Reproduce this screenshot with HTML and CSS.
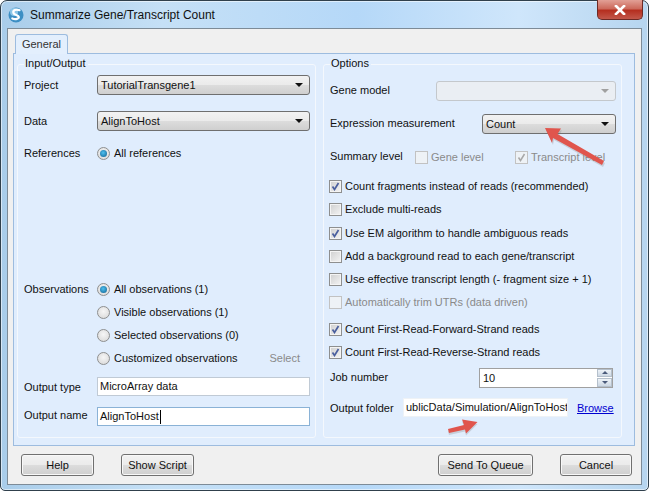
FILE: index.html
```html
<!DOCTYPE html>
<html lang="en">
<head>
<meta charset="utf-8">
<title>Summarize Gene/Transcript Count</title>
<link rel="stylesheet" href="styles.css">
</head>
<body>
<div class="window">
  <div class="titlebar">
    <svg class="app-icon" width="16" height="16" viewBox="0 0 16 16"><circle cx="8" cy="8" r="7.5" fill="#3d8fc4"/><circle cx="6" cy="5" r="4" fill="#8cc6e8"/><path d="M11.5 3.2C8 1.5 4.5 3.5 5.5 6c.9 2.2 5 1.8 5.3 4 .2 1.6-3 3-6.500 1.500" fill="none" stroke="#fff" stroke-width="2.200" stroke-linecap="round"/></svg>
    <span class="title">Summarize Gene/Transcript Count</span>
    <div class="close"><svg width="12" height="10" viewBox="0 0 12 10"><path d="M2 1l8 8M10 1L2 9" stroke="#fff" stroke-width="2.600" stroke-linecap="square" fill="none"/></svg></div>
  </div>
  <div class="client">
    <div class="tabstrip"><div class="tab">General</div></div>
    <div class="panel">
      <section class="group left">
        <div class="legend">Input/Output</div>
        <div class="row r-project"><label class="lbl">Project</label><div class="combo grow"><span>TutorialTransgene1</span><i class="caret"></i></div></div>
        <div class="row r-data"><label class="lbl">Data</label><div class="combo grow"><span>AlignToHost</span><i class="caret"></i></div></div>
        <div class="row r-ref"><label class="lbl">References</label><div class="radio-item"><i class="radio on"></i><span>All references</span></div></div>
        <div class="spacer"></div>
        <div class="row r-obs"><label class="lbl">Observations</label><div class="radio-item"><i class="radio on"></i><span>All observations (1)</span></div></div>
        <div class="row r-obs"><span class="lbl"></span><div class="radio-item"><i class="radio"></i><span>Visible observations (1)</span></div></div>
        <div class="row r-obs"><span class="lbl"></span><div class="radio-item"><i class="radio"></i><span>Selected observations (0)</span></div></div>
        <div class="row r-obs"><span class="lbl"></span><div class="radio-item grow"><i class="radio"></i><span>Customized observations</span></div><span class="muted select">Select</span></div>
        <div class="row r-type"><label class="lbl">Output type</label><div class="input grow">MicroArray data</div></div>
        <div class="row r-name"><label class="lbl lbl-up">Output name</label><div class="input grow focus">AlignToHost<i class="cursor"></i></div></div>
      </section>
      <section class="group right">
        <div class="legend">Options</div>
        <div class="row r-gene"><label class="lbl-r grow">Gene model</label><div class="combo disabled w-gene"><span></span><i class="caret"></i></div></div>
        <div class="row r-expr"><label class="lbl-r grow">Expression measurement</label><div class="combo w-expr"><span>Count</span><i class="caret"></i></div></div>
        <div class="row r-sum">
          <label class="lbl-s">Summary level</label>
          <div class="check-item w-level muted"><i class="check disabled"></i><span>Gene level</span></div>
          <div class="check-item muted"><i class="check disabled"><svg width="9" height="9" viewBox="0 0 9 9"><path d="M1.500 4.500l2 3 4-6.500" fill="none" stroke="#a8a8a8" stroke-width="1.500"/></svg></i><span>Transcript level</span></div>
        </div>
        <div class="checks">
          <div class="check-item c-row"><i class="check"><svg width="9" height="9" viewBox="0 0 9 9"><path d="M1.500 4.500l2 3 4-6.500" fill="none" stroke="#4a5f9e" stroke-width="1.700"/></svg></i><span>Count fragments instead of reads (recommended)</span></div>
          <div class="check-item c-row c-wide"><i class="check"></i><span>Exclude multi-reads</span></div>
          <div class="check-item c-row"><i class="check"><svg width="9" height="9" viewBox="0 0 9 9"><path d="M1.500 4.500l2 3 4-6.500" fill="none" stroke="#4a5f9e" stroke-width="1.700"/></svg></i><span>Use EM algorithm to handle ambiguous reads</span></div>
          <div class="check-item c-row"><i class="check"></i><span>Add a background read to each gene/transcript</span></div>
          <div class="check-item c-row"><i class="check"></i><span>Use effective transcript length (- fragment size + 1)</span></div>
          <div class="check-item c-row muted"><i class="check disabled"></i><span>Automatically trim UTRs (data driven)</span></div>
          <div class="check-item c-row c-gap"><i class="check"><svg width="9" height="9" viewBox="0 0 9 9"><path d="M1.500 4.500l2 3 4-6.500" fill="none" stroke="#4a5f9e" stroke-width="1.700"/></svg></i><span>Count First-Read-Forward-Strand reads</span></div>
          <div class="check-item c-row"><i class="check"><svg width="9" height="9" viewBox="0 0 9 9"><path d="M1.500 4.500l2 3 4-6.500" fill="none" stroke="#4a5f9e" stroke-width="1.700"/></svg></i><span>Count First-Read-Reverse-Strand reads</span></div>
        </div>
        <div class="row r-job"><label class="lbl-r grow">Job number</label>
          <div class="spin"><span class="spin-val">10</span><div class="spin-btns"><b><i class="up"></i></b><b><i class="down"></i></b></div></div>
        </div>
        <div class="row r-folder"><label class="lbl-f">Output folder</label><div class="input w-folder"><span class="scroll">ublicData/Simulation/AlignToHost</span></div><a class="link">Browse</a></div>
      </section>
    </div>
    <div class="footer">
      <button class="btn b-help">Help</button>
      <button class="btn b-script">Show Script</button>
      <span class="grow"></span>
      <button class="btn b-queue">Send To Queue</button>
      <button class="btn b-cancel">Cancel</button>
    </div>
  </div>
  <svg class="arrows" width="650" height="492" viewBox="0 0 650 492">
    <path d="M545 128L561 128.500 557.500 134 604 161 602 165 553 138 552 143z" fill="#777" opacity=".25" transform="translate(1 2)"/>
    <path d="M545 128L561 128.500 557.500 134 604 161 602 165 553 138 552 143z" fill="#e0554d"/>
    <path d="M477.500 422L462 419.500 464 425 448 429 449 433 465 429.500 466 433.500z" fill="#777" opacity=".25" transform="translate(0 2)"/>
    <path d="M477.500 422L462 419.500 464 425 448 429 449 433 465 429.500 466 433.500z" fill="#e0554d"/>
  </svg>
</div>
</body>
</html>
```
FILE: styles.css
```css
* { box-sizing: border-box; }
html, body { margin: 0; padding: 0; width: 650px; height: 492px; overflow: hidden; background: #fff; }
body { font: 11px/16px "Liberation Sans", Arial, sans-serif; color: #111; }
.window {
  position: relative; width: 649px; height: 491px; display: flex; flex-direction: column;
  padding: 0 6px 5px 6px; border: 1px solid #30404c; border-radius: 7px 7px 5px 5px;
  background: linear-gradient(90deg, #a9cdea 0%, #c5e0f6 25%, #b5d8f8 55%, #cfe6fb 80%, #b6d5ef 100%);
  box-shadow: inset 0 0 0 1px rgba(255,255,255,.55);
}
.titlebar { height: 27px; flex: none; display: flex; align-items: center; position: relative; }
.app-icon { flex: none; margin: 0 6px 0 1px; }
.title { font-size: 12px; color: #111; flex: 1; }
.close {
  position: absolute; right: -1px; top: -1px; width: 46px; height: 20px; display: flex; align-items: center; justify-content: center;
  background: linear-gradient(#e2a096 0%, #cc6a5c 45%, #b52f20 55%, #c2574a 100%);
  border: 1px solid #6d2a25; border-top: 0; border-radius: 0 0 5px 5px;
}
.client { flex: 1; display: flex; flex-direction: column; background: #f0f0f0; border: 1px solid #7d8b97; padding: 5px 6px 0 5px; min-height: 0; }
.tabstrip { height: 19px; flex: none; padding-left: 2px; position: relative; z-index: 1; }
.tab { width: 53px; height: 20px; background: #e3effd; border: 1px solid #9dbcdf; border-bottom: 0; border-radius: 3px 3px 0 0; text-align: center; line-height: 18px; color: #333; }
.panel { height: 393px; flex: none; display: flex; gap: 7px; background: #e0edfd; border: 1px solid #9dbcdf; padding: 10px 13px 7px 3px; }
.group { width: 299px; flex: none; position: relative; border: 1px solid #f4f8fd; border-radius: 3px; display: flex; flex-direction: column; padding: 0 5px 0 6px; }
.legend { position: absolute; left: 6px; top: -9px; padding: 0 2px 0 1px; background: #e0edfd; line-height: 15px; }
.grow { flex: 1; min-width: 0; }
.row { display: flex; align-items: center; flex: none; }
.lbl { width: 73px; flex: none; }
.lbl-up { margin-bottom: 4px; }
.r-project { margin-top: 10px; height: 20px; }
.r-data { margin-top: 16px; height: 20px; }
.r-ref { margin-top: 14px; height: 16px; }
.spacer { height: 120px; flex: none; }
.r-obs { height: 16px; margin-bottom: 7px; }
.r-type { margin-top: 4px; height: 19px; }
.r-name { margin-top: 11px; height: 19px; }
.combo {
  height: 20px; display: flex; align-items: center; justify-content: space-between; padding: 0 6px 0 3px;
  border: 1px solid #6f6f6f; border-radius: 3px;
  background: linear-gradient(#f2f2f2 0%, #ebebeb 48%, #dcdcdc 52%, #cfcfcf 100%);
}
.combo.disabled { background: #eaeef3; border-color: #c4c8cc; }
.caret { width: 0; height: 0; border: 4px solid transparent; border-top: 4px solid #111; border-bottom: 0; }
.disabled .caret { border-top-color: #a0a0a0; }
.w-gene { width: 180px; }
.w-expr { width: 134px; }
.radio-item { display: flex; align-items: center; gap: 4px; }
.radio { width: 13px; height: 13px; flex: none; border-radius: 50%; border: 1px solid #8e8f8f; background: radial-gradient(circle at 50% 40%, #f6f6f6, #d6d6d6); display: flex; align-items: center; justify-content: center; }
.radio.on::after { content: ""; width: 7px; height: 7px; border-radius: 50%; background: radial-gradient(circle at 45% 40%, #4ec0f0, #0f5f90); }
.muted { color: #8a8a8a; }
.select { margin-right: 10px; }
.input { height: 19px; background: #fff; border: 1px solid #c0cad5; padding: 0 2px; line-height: 17px; white-space: nowrap; overflow: hidden; display: flex; align-items: center; }
.input.focus { border-color: #8ab2d6; }
.cursor { display: inline-block; width: 1px; height: 14px; background: #000; margin-left: 1px; }
.lbl-r { padding-right: 4px; margin-bottom: 2px; }
.r-gene { margin-top: 16px; height: 20px; }
.r-expr { margin-top: 13px; height: 20px; }
.r-sum { margin-top: 15px; height: 16px; }
.lbl-s { width: 85px; flex: none; margin-bottom: 3px; }
.w-level { width: 100px; }
.check-item { display: flex; align-items: center; gap: 3px; white-space: nowrap; }
.check { width: 13px; height: 13px; flex: none; border: 1px solid #8e8f8f; background: linear-gradient(135deg, #cfcfcf, #f4f4f4); box-shadow: inset 0 0 0 1px #f4f4f4; display: flex; align-items: center; justify-content: center; }
.check.disabled { border-color: #c2c2c2; background: #eef2f6; box-shadow: none; }
.checks { margin: 13px 0 0 -1px; display: flex; flex-direction: column; }
.c-row { height: 16px; margin-bottom: 7px; }
.c-wide { margin-bottom: 8px; }
.c-gap { margin-top: 4px; }
.r-job { margin-top: 1px; height: 19px; }
.spin { width: 134px; height: 20px; margin-right: 3px; background: #fff; border: 1px solid #a0a0a0; display: flex; align-items: center; justify-content: space-between; padding-left: 3px; }
.spin-btns { width: 15px; height: 18px; display: flex; flex-direction: column; gap: 1px; }
.spin-btns b { flex: 1; background: linear-gradient(#eef3f8, #ccd7e3); border: 1px solid #b5c0cc; display: flex; align-items: center; justify-content: center; }
.spin-btns i { width: 0; height: 0; border: 3px solid transparent; }
.spin-btns .up { border-bottom: 3px solid #4a5a7a; border-top: 0; }
.spin-btns .down { border-top: 3px solid #4a5a7a; border-bottom: 0; }
.r-folder { margin-top: 11px; height: 19px; }
.lbl-f { width: 73px; flex: none; }
.w-folder { width: 165px; border-color: #eef2f6; }
.scroll { display: block; }
.link { margin-left: 9px; color: #0000d0; text-decoration: underline; }
.footer { flex: 1; display: flex; align-items: center; padding: 0 3px 0 8px; }
.btn { height: 22px; font: inherit; color: #111; padding: 0; border: 1px solid #707070; border-radius: 3px; background: linear-gradient(#f2f2f2 0%, #ebebeb 48%, #dcdcdc 52%, #cfcfcf 100%); box-shadow: inset 0 0 0 1px #f8f8f8; }
.b-help { width: 73px; }
.b-script { width: 73px; margin-left: 27px; }
.b-queue { width: 95px; }
.b-cancel { width: 72px; margin-left: 27px; }
.arrows { position: absolute; left: -1px; top: -1px; pointer-events: none; }
```
